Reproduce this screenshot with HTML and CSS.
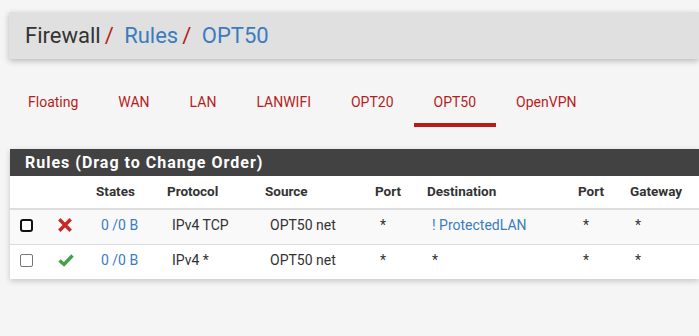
FILE: index.html
```html
<!DOCTYPE html>
<html lang="en">

    <head>
        <meta charset="UTF-8">
        <meta name="viewport" content="width=device-width, initial-scale=1.0">
        <title>Firewall: Rules: OPT50</title>
        <link rel="stylesheet" href="styles.css">
    </head>

    <body>
        <div class="page-header">
            <h1 class="breadcrumb">
                <span class="crumb">Firewall</span><span class="sep">/</span>
                <a class="crumb link" href="#">Rules</a><span class="sep">/</span>
                <a class="crumb link" href="#">OPT50</a>
            </h1>
        </div>

        <ul class="nav-tabs">
            <li><a href="#">Floating</a></li>
            <li><a href="#">WAN</a></li>
            <li><a href="#">LAN</a></li>
            <li><a href="#">LANWIFI</a></li>
            <li><a href="#">OPT20</a></li>
            <li class="active"><a href="#">OPT50</a></li>
            <li><a href="#">OpenVPN</a></li>
        </ul>

        <div class="panel">
            <div class="panel-heading">
                <h2 class="panel-title">Rules (Drag to Change Order)</h2>
            </div>
            <table class="rules">
                <colgroup>
                    <col style="width: 38px">
                    <col style="width: 40px">
                    <col style="width: 71px">
                    <col style="width: 98px">
                    <col style="width: 110px">
                    <col style="width: 52px">
                    <col style="width: 151px">
                    <col style="width: 52px">
                    <col style="width: 77px">
                </colgroup>
                <thead>
                    <tr>
                        <th></th>
                        <th></th>
                        <th>States</th>
                        <th>Protocol</th>
                        <th>Source</th>
                        <th>Port</th>
                        <th>Destination</th>
                        <th>Port</th>
                        <th>Gateway</th>
                    </tr>
                </thead>
                <tbody>
                    <tr class="striped">
                        <td class="tick"><span class="box focused"></span></td>
                        <td class="tick">
                            <svg class="icon" width="14" height="14" viewBox="0 0 14 14">
                                <path d="M2.5 2.5 L11.5 11.5 M11.5 2.5 L2.5 11.5" stroke="#c62828" stroke-width="3.4" stroke-linecap="square"/>
                            </svg>
                        </td>
                        <td><a href="#">0 /0 B</a></td>
                        <td>IPv4 TCP</td>
                        <td>OPT50 net</td>
                        <td>*</td>
                        <td><a href="#">! ProtectedLAN</a></td>
                        <td>*</td>
                        <td>*</td>
                    </tr>
                    <tr>
                        <td class="tick"><span class="box"></span></td>
                        <td class="tick">
                            <svg class="icon" width="16" height="14" viewBox="0 0 16 14">
                                <path d="M1.5 7.5 L6 11.5 L14.5 2.5" fill="none" stroke="#43a047" stroke-width="3.4" stroke-linejoin="miter"/>
                            </svg>
                        </td>
                        <td><a href="#">0 /0 B</a></td>
                        <td>IPv4 *</td>
                        <td>OPT50 net</td>
                        <td>*</td>
                        <td>*</td>
                        <td>*</td>
                        <td>*</td>
                    </tr>
                </tbody>
            </table>
        </div>
    </body>

</html>
```

FILE: styles.css
```css
:root {
    --red: #b71c1c;
    --blue: #3b7cbf;
    --dark: #424242;
    --text-main: #333;
}

* {
    box-sizing: border-box;
    margin: 0;
    padding: 0;
    font-family: Roboto, 'Liberation Sans', Arial, sans-serif;
}

html,
body {
    overflow: hidden;
}

body {
    background: #f5f5f5;
    color: var(--text-main);
    width: 699px;
    height: 336px;
}

a {
    color: var(--blue);
    text-decoration: none;
}

.page-header {
    margin: 12px 0 0 9px;
    width: 690px;
    height: 47px;
    background: #e0e0e0;
    box-shadow: 0 2px 6px rgba(0, 0, 0, 0.25);
    padding-left: 16px;
}

.breadcrumb {
    font-size: 22px;
    font-weight: 400;
    line-height: 47px;
    color: #333;
    white-space: nowrap;
}

.breadcrumb .sep {
    color: var(--red);
    margin: 0 5px 0 4px;
}

.breadcrumb .link {
    color: var(--blue);
}

.nav-tabs {
    list-style: none;
    display: flex;
    margin: 21px 0 0 8px;
}

.nav-tabs a {
    display: block;
    padding: 12px 20px 11px;
    font-size: 14px;
    line-height: 20px;
    color: var(--red);
    border-bottom: 4px solid transparent;
}

.nav-tabs .active a {
    border-bottom-color: var(--red);
}

.panel {
    margin: 22px 0 0 10px;
    width: 689px;
    background: white;
    box-shadow: 0 2px 6px rgba(0, 0, 0, 0.2);
}

.panel-heading {
    background: var(--dark);
    height: 27px;
    padding-left: 15px;
}

.panel-title {
    color: white;
    font-size: 16px;
    font-weight: 700;
    line-height: 27px;
    letter-spacing: 1px;
}

.rules {
    border-collapse: collapse;
    table-layout: fixed;
    width: 689px;
    font-size: 14px;
}

.rules th {
    text-align: left;
    font-size: 13.5px;
    font-weight: 700;
    line-height: 20px;
    padding: 5px 8px 7px;
    border-bottom: 2px solid #ddd;
    white-space: nowrap;
}

.rules td {
    line-height: 20px;
    padding: 5px 8px 9px 13px;
    border-bottom: 1px solid #ddd;
    white-space: nowrap;
}

.rules tbody tr:last-child td {
    border-bottom: none;
}

.rules .striped {
    background: #f9f9f9;
}

.rules td.tick {
    padding-left: 10px;
}

.box {
    display: inline-block;
    width: 13px;
    height: 13px;
    border: 1px solid #767676;
    border-radius: 2px;
    background: white;
    vertical-align: -2px;
}

.box.focused {
    border: 2.5px solid #111;
    border-radius: 3px;
}

.icon {
    display: inline-block;
    vertical-align: -2px;
}
```
